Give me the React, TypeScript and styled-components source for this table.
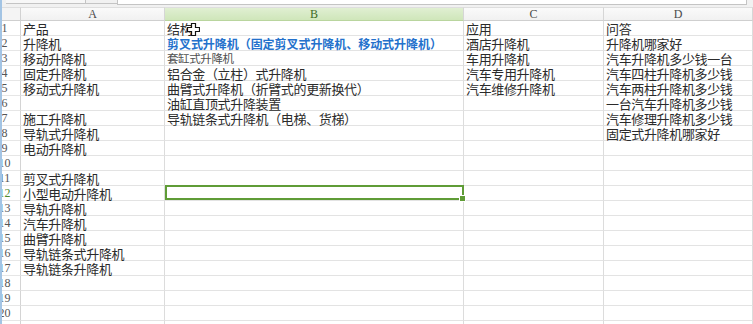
import React from "react";
import styled, { createGlobalStyle, css } from "styled-components";

const GlobalStyle = createGlobalStyle`
  html, body { margin: 0; padding: 0; background: #ffffff; overflow: hidden; }
  * { box-sizing: border-box; }
`;

const Window = styled.div`
  width: 753px;
  height: 324px;
  overflow: hidden;
  background: #ffffff;
  border-left: 2px solid #a3c4e4;
  display: flex;
  flex-direction: column;
`;

const TopStrip = styled.div`
  height: 7px;
  flex: none;
  display: flex;
  align-items: flex-start;
  background: #f1f1f1;
`;

const NameBox = styled.div`
  width: 80px;
  height: 4px;
  margin-left: 4px;
  background: #f7f7f7;
  border-bottom: 1px solid #c4c4c4;
  border-right: 1px solid #c4c4c4;
`;

const FxArea = styled.div`
  width: 31px;
  height: 4px;
  border-bottom: 1px solid #c4c4c4;
`;

const FormulaInput = styled.div`
  flex: 1;
  height: 5px;
  margin-right: 6px;
  background: #ffffff;
  border-left: 1px solid #c4c4c4;
  border-right: 1px solid #c4c4c4;
  border-bottom: 1px solid #c4c4c4;
`;

const Sheet = styled.div`
  display: grid;
  grid-template-columns: 19px 144px 299px 140px 1fr;
  grid-auto-rows: 15px;
  grid-template-rows: 14px;
  font-family: "Noto Sans CJK SC", "Liberation Sans", sans-serif;
`;

const Corner = styled.div`
  background: #f4f4f4;
  border-right: 1px solid #d2d2d2;
  border-bottom: 1px solid #cfcfcf;
  border-top: 1px solid #dedede;
`;

const ColHeader = styled.div<{ $active?: boolean }>`
  display: flex;
  align-items: center;
  justify-content: center;
  font-family: "Liberation Serif", "DejaVu Serif", serif;
  font-size: 12px;
  line-height: 12px;
  color: #4a4a4a;
  background: linear-gradient(#fafafa, #f1f1f1);
  border-right: 1px solid #d6d6d6;
  border-bottom: 1px solid #cfcfcf;
  border-top: 1px solid #dedede;
  ${(p) =>
    p.$active &&
    css`
      background: linear-gradient(#e0efd2, #cfe6ba);
      color: #3d6b1f;
      border-bottom-color: #b9d59e;
    `}
`;

const RowHeader = styled.div<{ $active?: boolean }>`
  overflow: hidden;
  background: #ffffff;
  border-right: 1px solid #d4d4d4;
  border-bottom: 1px solid #e6e6e6;
  font-family: "Liberation Serif", "DejaVu Serif", serif;
  font-size: 12px;
  line-height: 15px;
  color: ${(p) => (p.$active ? "#4f8a2a" : "#555555")};
`;

const RowNum = styled.span`
  display: block;
  width: 27px;
  margin-left: -11px;
  text-align: center;
`;

type Variant = "normal" | "blue" | "small";

const Cell = styled.div<{ $variant?: Variant; $selected?: boolean }>`
  position: relative;
  white-space: nowrap;
  overflow: visible;
  padding-left: 2px;
  border-right: 1px solid #dcdcdc;
  border-bottom: 1px solid #e3e3e3;
  font-size: 13px;
  letter-spacing: -0.35px;
  line-height: 15px;
  color: #2b2b2b;
  z-index: 1;
  ${(p) =>
    p.$variant === "blue" &&
    css`
      font-size: 12px;
      letter-spacing: -0.05px;
      font-weight: 700;
      color: #2471cc;
    `}
  ${(p) =>
    p.$variant === "small" &&
    css`
      font-size: 11.5px;
      letter-spacing: -0.4px;
      color: #505050;
    `}
  ${(p) =>
    p.$selected &&
    css`
      z-index: 3;
      &::before {
        content: "";
        position: absolute;
        left: 0;
        top: -1px;
        right: -1px;
        bottom: 0;
        border: 2px solid #5f9c36;
      }
      &::after {
        content: "";
        position: absolute;
        right: -3px;
        bottom: -2px;
        width: 5px;
        height: 5px;
        background: #5f9c36;
        border: 1px solid #ffffff;
      }
    `}
`;

const CursorMark = styled.svg`
  position: absolute;
  left: 22px;
  top: 2px;
  width: 13px;
  height: 13px;
  z-index: 4;
`;

type CellDef = string | { text: string; variant?: Variant };

const rows: CellDef[][] = [
  ["产品", "结构", "应用", "问答"],
  ["升降机", { text: "剪叉式升降机（固定剪叉式升降机、移动式升降机）", variant: "blue" }, "酒店升降机", "升降机哪家好"],
  ["移动升降机", { text: "套缸式升降机", variant: "small" }, "车用升降机", "汽车升降机多少钱一台"],
  ["固定升降机", "铝合金（立柱）式升降机", "汽车专用升降机", "汽车四柱升降机多少钱"],
  ["移动式升降机", "曲臂式升降机（折臂式的更新换代）", "汽车维修升降机", "汽车两柱升降机多少钱"],
  ["", "油缸直顶式升降装置", "", "一台汽车升降机多少钱"],
  ["施工升降机", "导轨链条式升降机（电梯、货梯）", "", "汽车修理升降机多少钱"],
  ["导轨式升降机", "", "", "固定式升降机哪家好"],
  ["电动升降机", "", "", ""],
  ["", "", "", ""],
  ["剪叉式升降机", "", "", ""],
  ["小型电动升降机", "", "", ""],
  ["导轨升降机", "", "", ""],
  ["汽车升降机", "", "", ""],
  ["曲臂升降机", "", "", ""],
  ["导轨链条式升降机", "", "", ""],
  ["导轨链条升降机", "", "", ""],
  ["", "", "", ""],
  ["", "", "", ""],
  ["", "", "", ""],
  ["", "", "", ""],
];

const columns = ["A", "B", "C", "D"];
const SELECTED_ROW = 12;
const SELECTED_COL = 1;

export default function App() {
  return (
    <>
      <GlobalStyle />
      <Window>
        <TopStrip>
          <NameBox />
          <FxArea />
          <FormulaInput />
        </TopStrip>
        <Sheet>
          <Corner />
          {columns.map((c, i) => (
            <ColHeader key={c} $active={i === SELECTED_COL}>
              {c}
            </ColHeader>
          ))}
          {rows.map((r, ri) => {
            const rowNo = ri + 1;
            return (
              <React.Fragment key={ri}>
                <RowHeader $active={rowNo === SELECTED_ROW}>
                  <RowNum>{rowNo}</RowNum>
                </RowHeader>
                {r.map((cell, ci) => {
                  const def = typeof cell === "string" ? { text: cell } : cell;
                  return (
                    <Cell
                      key={ci}
                      $variant={def.variant}
                      $selected={rowNo === SELECTED_ROW && ci === SELECTED_COL}
                    >
                      {def.text}
                      {rowNo === 1 && ci === 1 && (
                        <CursorMark viewBox="0 0 13 13">
                          <path
                            d="M4.5 0.5h4v4h4v4h-4v4h-4v-4h-4v-4h4z"
                            fill="#ffffff"
                            stroke="#111111"
                            strokeWidth="1.2"
                            strokeLinejoin="miter"
                          />
                        </CursorMark>
                      )}
                    </Cell>
                  );
                })}
              </React.Fragment>
            );
          })}
        </Sheet>
      </Window>
    </>
  );
}
